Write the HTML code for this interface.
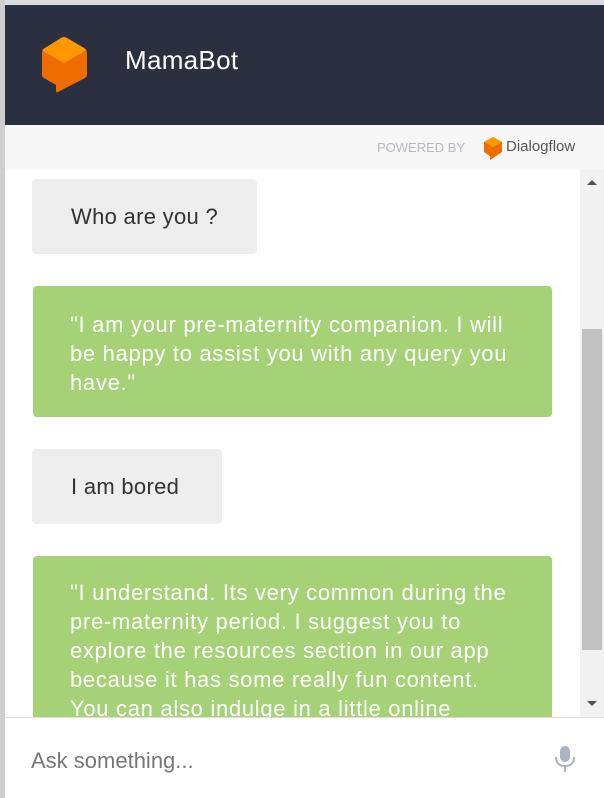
<!DOCTYPE html>
<html><head><style>
*{margin:0;padding:0;box-sizing:border-box}
body{width:604px;height:798px;overflow:hidden;background:#fff;font-family:"Liberation Sans",sans-serif;position:relative}
.topb{position:absolute;left:0;top:0;width:604px;height:5px;background:#dcdcdc}
.leftb{position:absolute;left:0;top:0;width:5px;height:798px;background:#cfcfcf}
.hdr{position:absolute;left:5px;top:5px;width:599px;height:120px;background:#2b3040}
.title{position:absolute;left:125px;top:45px;color:#fff;font-size:26px;letter-spacing:0.3px}
.pb{position:absolute;left:5px;top:125px;width:599px;height:45px;background:#f7f7f7}
.pbt{position:absolute;left:377px;top:140px;font-size:13px;color:#b5b9c0}
.df{position:absolute;left:506px;top:138px;font-size:15px;color:#555}
.chat{position:absolute;left:5px;top:170px;width:575px;height:547px;overflow:hidden;background:#fff}
.b{position:absolute;font-size:22px;line-height:29px;border-radius:4px;white-space:nowrap}
.u{background:#eeeeee;color:#333}
.g{background:#a5d276;color:#fff;letter-spacing:0.7px}
.sb{position:absolute;left:580px;top:170px;width:24px;height:547px;background:#f1f1f1}
.th{position:absolute;left:582px;top:329px;width:20px;height:321px;background:#c1c1c1}
.inp{position:absolute;left:5px;top:717px;width:599px;height:81px;background:#fff;border-top:1px solid #ddd}
.ph{position:absolute;left:31px;top:748px;font-size:22px;color:#777}
</style></head><body>
<div class="topb"></div><div class="leftb"></div>
<div class="hdr"></div>
<svg style="position:absolute;left:40px;top:35px" width="48" height="60" viewBox="0 0 48 60">
<path d="M24 2 Q25 2 27 3 L44 13 Q47 15 47 18 L47 40 Q47 42 45 43 L18 57 Q16 58 16 56 L16 50 L4 43 Q2 42 2 40 L2 18 Q2 15 5 13 L21 3 Q23 2 24 2 Z" fill="#ef6c00"/>
<path d="M24 2 Q25 2 27 3 L44 13 Q47 15 45 16 L24 28 L3 16 Q1 15 5 13 L21 3 Q23 2 24 2 Z" fill="#ff9800"/>
</svg>
<div class="title">MamaBot</div>
<div class="pb"></div>
<div class="pbt">POWERED BY</div>
<svg style="position:absolute;left:483px;top:136px" width="20" height="25" viewBox="0 0 20 25">
<path d="M10 1 L19 6 L19 16 L7 24 L7 20 L1 16 L1 6 Z" fill="#ef6c00"/>
<path d="M10 1 L19 6 L10 11 L1 6 Z" fill="#ff9800"/>
</svg>
<div class="df">Dialogflow</div>
<div class="chat">
<div class="b u" style="left:27px;top:9px;width:225px;height:75px;padding:23px 0 0 39px;letter-spacing:0.3px">Who are you ?</div>
<div class="b g" style="left:28px;top:116px;width:519px;height:131px;padding:24px 0 0 37px">"I am your pre-maternity companion. I will<br>be happy to assist you with any query you<br>have."</div>
<div class="b u" style="left:27px;top:279px;width:190px;height:75px;padding:23px 0 0 39px;letter-spacing:0.3px">I am bored</div>
<div class="b g" style="left:28px;top:386px;width:519px;height:200px;padding:22px 0 0 37px">"I understand. Its very common during the<br>pre-maternity period. I suggest you to<br>explore the resources section in our app<br>because it has some really fun content.<br>You can also indulge in a little online</div>
</div>
<div class="sb"></div>
<div class="th"></div>
<svg style="position:absolute;left:586px;top:178px" width="12" height="8"><path d="M1 7 L6 2 L11 7 Z" fill="#505050"/></svg>
<svg style="position:absolute;left:586px;top:700px" width="12" height="8"><path d="M1 1 L6 6 L11 1 Z" fill="#505050"/></svg>
<div class="inp"></div>
<div class="ph">Ask something...</div>
<svg style="position:absolute;left:554px;top:745px" width="22" height="28" viewBox="0 0 22 28">
<rect x="6" y="1" width="10" height="16" rx="5" fill="#aab4c4"/>
<path d="M2 12 Q2 21 11 21 Q20 21 20 12" stroke="#aab4c4" stroke-width="2" fill="none"/>
<rect x="10" y="21" width="2" height="6" fill="#aab4c4"/>
</svg>
</body></html>
